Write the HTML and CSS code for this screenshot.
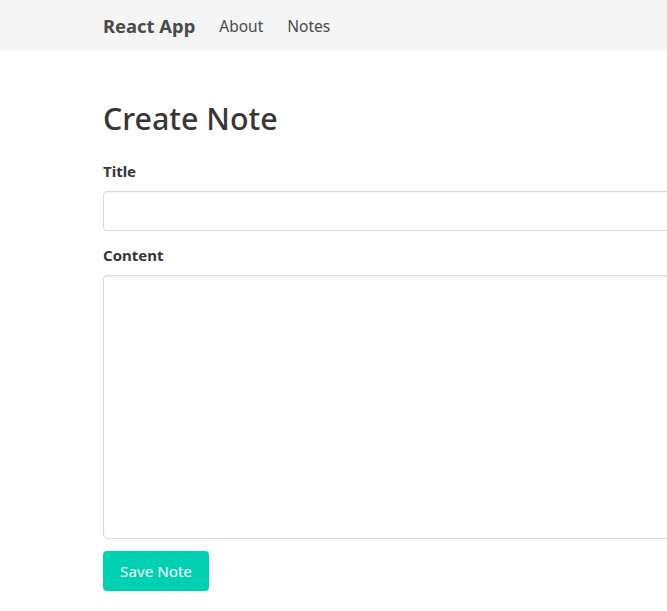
FILE: index.html
```html
<!DOCTYPE html>
<html lang="en">
<head>
<meta charset="utf-8">
<title>React App</title>
<link rel="stylesheet" href="styles.css">
</head>
<body>
<nav class="navbar">
  <div class="container nav-inner">
    <a class="brand" href="#">React App</a>
    <a class="nav-item" href="#">About</a>
    <a class="nav-item" href="#">Notes</a>
  </div>
</nav>
<section class="section">
  <div class="container">
    <h1 class="title">Create Note</h1>
    <form class="form">
      <div class="field">
        <label class="label">Title</label>
        <input class="input" type="text">
      </div>
      <div class="field">
        <label class="label">Content</label>
        <textarea class="textarea" rows="10"></textarea>
      </div>
      <button class="button" type="button">Save Note</button>
    </form>
  </div>
</section>
</body>
</html>
```

FILE: styles.css
```css
html, body {
  margin: 0;
  padding: 0;
  overflow-x: hidden;
  background: #fff;
}
body {
  font-family: "Noto Sans", "Open Sans", sans-serif;
  font-size: 15px;
  color: #4a4a4a;
  line-height: 24px;
}
.container {
  width: 960px;
  margin-left: 103px;
}
.navbar {
  background: #f5f5f5;
  height: 51px;
}
.nav-inner {
  display: flex;
  align-items: center;
  height: 51px;
  gap: 24px;
}
.navbar a {
  text-decoration: none;
  color: #4a4a4a;
}
.brand {
  font-weight: 700;
  font-size: 18.4px;
}
.nav-item {
  font-size: 15.5px;
}
.section {
  padding: 48px 0;
}
.title {
  margin: 0 0 22px;
  padding-top: 2px;
  font-size: 30.4px;
  font-weight: 500;
  line-height: 36px;
  color: #363636;
}
.field {
  margin-bottom: 12px;
}
.label {
  display: block;
  font-weight: 700;
  color: #363636;
  margin-bottom: 8px;
}
.input, .textarea {
  display: block;
  box-sizing: border-box;
  width: 100%;
  border: 1px solid #dbdbdb;
  border-radius: 4px;
  box-shadow: inset 0 1px 2px rgba(10,10,10,0.06);
  font: inherit;
  padding: 0 11px;
  margin: 0;
}
.input {
  height: 40px;
}
.textarea {
  height: 264px;
  resize: none;
  padding: 11px;
}
.button {
  display: block;
  height: 40px;
  width: 106px;
  padding: 0;
  border: 1px solid transparent;
  border-radius: 4px;
  background: #00d1b2;
  color: #fff;
  font: inherit;
  font-size: 15.2px;
  cursor: pointer;
}
```
